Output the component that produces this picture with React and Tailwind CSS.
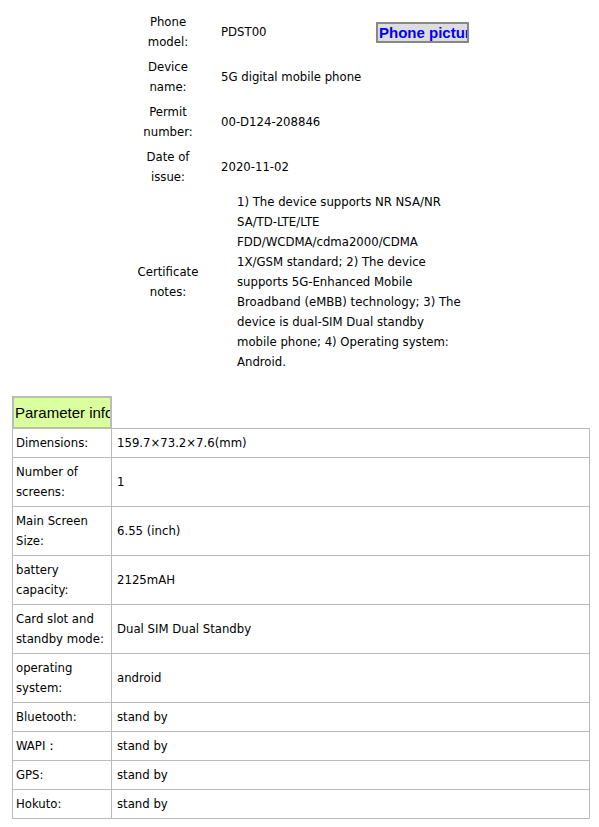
import React from "react";

const topRows = [
  { label: ["Phone", "model:"], value: "PDST00", pic: true },
  { label: ["Device", "name:"], value: "5G digital mobile phone" },
  { label: ["Permit", "number:"], value: "00-D124-208846" },
  { label: ["Date of", "issue:"], value: "2020-11-02" },
];

const notes = [
  "1) The device supports NR NSA/NR",
  "SA/TD-LTE/LTE",
  "FDD/WCDMA/cdma2000/CDMA",
  "1X/GSM standard; 2) The device",
  "supports 5G-Enhanced Mobile",
  "Broadband (eMBB) technology; 3) The",
  "device is dual-SIM Dual standby",
  "mobile phone; 4) Operating system:",
  "Android.",
];

const params = [
  { label: ["Dimensions:"], value: "159.7×73.2×7.6(mm)" },
  { label: ["Number of", "screens:"], value: "1" },
  { label: ["Main Screen", "Size:"], value: "6.55 (inch)" },
  { label: ["battery", "capacity:"], value: "2125mAH" },
  { label: ["Card slot and", "standby mode:"], value: "Dual SIM Dual Standby" },
  { label: ["operating", "system:"], value: "android" },
  { label: ["Bluetooth:"], value: "stand by" },
  { label: ["WAPI："], value: "stand by" },
  { label: ["GPS:"], value: "stand by" },
  { label: ["Hokuto:"], value: "stand by" },
];

const Lines = ({ lines }) =>
  lines.map((l, i) => (
    <React.Fragment key={i}>
      {i > 0 && <br />}
      {l}
    </React.Fragment>
  ));

const App = () => {
  return (
    <div className="min-h-[827px] bg-white text-black text-[13px] leading-[20px] font-['DejaVu_Sans_Condensed','DejaVu_Sans',sans-serif] [font-stretch:condensed]">
      <div className="w-[340px] ml-[130px] pt-[12px] flex flex-col gap-[5px]">
        {topRows.map((r, i) => (
          <div key={i} className="flex items-center h-[40px]">
            <div className="w-[76px] text-center">
              <Lines lines={r.label} />
            </div>
            <div className="w-[170px] pl-[15px] whitespace-nowrap">{r.value}</div>
            {r.pic && (
              <div className="w-[93px] h-[21px] border-2 border-[#888] bg-[#dddddd] overflow-hidden whitespace-nowrap text-[#0000ff] font-bold text-[15px] leading-[17px] pl-[1px] font-['Liberation_Sans',Arial,sans-serif] [font-stretch:normal]">
                Phone picture
              </div>
            )}
          </div>
        ))}
        <div className="flex items-center">
          <div className="w-[76px] text-center">
            Certificate
            <br />
            notes:
          </div>
          <div className="pl-[31px] whitespace-nowrap">
            <Lines lines={notes} />
          </div>
        </div>
      </div>

      <div className="ml-[12px] mt-[24px] w-[578px]">
        <div className="w-[100px] h-[33px] border-2 border-[#bbbbbb] bg-[#d9ff9e] overflow-hidden whitespace-nowrap text-[15px] leading-[29px] pl-[1px] font-['Liberation_Sans',Arial,sans-serif] [font-stretch:normal]">
          Parameter info
        </div>
        <div className="border border-[#bbbbbb] border-t-0 -mt-px">
          {params.map((p, i) => (
            <div key={i} className="flex border-t border-[#bbbbbb]">
              <div className="w-[99px] shrink-0 pl-[3px] pr-[4px] py-[4px] border-r border-[#bbbbbb] whitespace-nowrap flex items-center">
                <div>
                  <Lines lines={p.label} />
                </div>
              </div>
              <div className="flex-1 px-[5px] py-[4px] flex items-center">{p.value}</div>
            </div>
          ))}
        </div>
      </div>
    </div>
  );
};

export default App;
